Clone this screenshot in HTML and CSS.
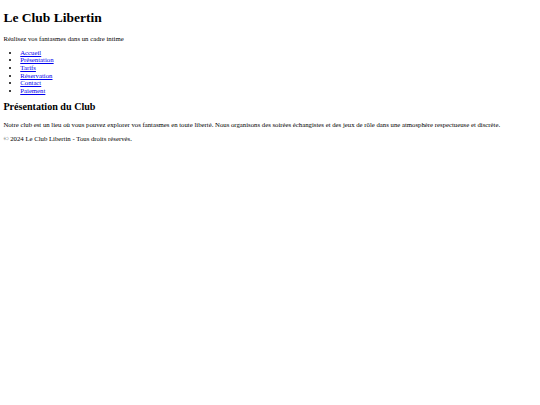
FILE: index.html
```html
<!DOCTYPE html>
<html lang="fr">
<head>
<meta charset="utf-8">
<title>Le Club Libertin</title>
<link rel="stylesheet" href="styles.css">
</head>
<body class="page">
<header class="site-header">
<h1 class="title">Le Club Libertin</h1>
<p class="text">Réalisez vos fantasmes dans un cadre intime</p>
</header>
<nav class="nav">
<ul class="nav-list">
<li><a class="link" href="#accueil">Accueil</a></li>
<li><a class="link" href="#presentation">Présentation</a></li>
<li><a class="link" href="#tarifs">Tarifs</a></li>
<li><a class="link" href="#reservation">Réservation</a></li>
<li><a class="link" href="#contact">Contact</a></li>
<li><a class="link" href="#paiement">Paiement</a></li>
</ul>
</nav>
<main class="main">
<section class="section">
<h2 class="subtitle">Présentation du Club</h2>
<p class="text">Notre club est un lieu où vous pouvez explorer vos fantasmes en toute liberté. Nous organisons des soirées échangistes et des jeux de rôle dans une atmosphère respectueuse et discrète.</p>
</section>
</main>
<footer class="footer">
<p class="text">© 2024 Le Club Libertin - Tous droits réservés.</p>
</footer>
</body>
</html>
```

FILE: styles.css
```css
html {
  background: #ffffff;
}
.page {
  margin: 3.375px;
  font-family: "Liberation Serif", "Times New Roman", serif;
  font-size: 6.75px;
  line-height: 7.6px;
  color: #000000;
}
.title {
  font-size: 13.5px;
  line-height: 15.6px;
  font-weight: bold;
  margin: 6.5px 0 9.05px;
}
.subtitle {
  font-size: 10.125px;
  line-height: 11.8px;
  font-weight: bold;
  margin: 7px 0 7.9px;
}
.text {
  margin: 6.75px 0;
}
.nav-list {
  margin: 6.75px 0 5.5px;
  padding-left: 16.875px;
  list-style: disc;
}
.link {
  color: #0000ee;
  text-decoration: underline;
}
```
